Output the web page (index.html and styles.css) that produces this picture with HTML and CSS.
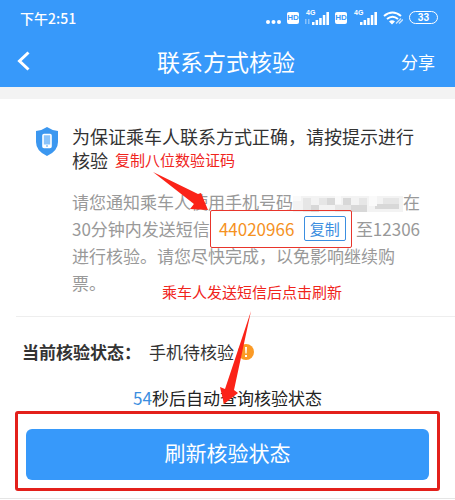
FILE: index.html
```
<!DOCTYPE html>
<html lang="zh-CN">
  <head>
    <meta charset="UTF-8">
    <meta name="viewport" content="width=device-width, initial-scale=1">
    <title>联系方式核验</title>
    <link rel="stylesheet" href="styles.css">
  </head>
  <body>
    <header class="top">
      <div class="statusbar">
        <span class="time">下午2:51</span>
        <div class="icons">
          <svg width="16" height="16" viewBox="0 0 16 16" fill="#fff">
            <circle cx="3" cy="12" r="2"/><circle cx="8.500" cy="12" r="2"/><circle cx="14" cy="12" r="2"/>
          </svg>
          <span class="hd">HD</span>
          <span class="signal"><small>4G</small>
            <svg width="24" height="14" viewBox="0 0 24 14" fill="#fff">
              <path d="M7 11h2.500v3H7zM10.600 9h2.500v5h-2.500zM14.200 7h2.500v7h-2.500zM17.800 4h2.500v10h-2.500zM21.400 1H24v13h-2.600z"/>
              <path d="M0 8h1.500v5H0zM3 8h1.500v5H3z" opacity=".4"/>
            </svg>
          </span>
          <span class="hd">HD</span>
          <span class="signal"><small>4G</small>
            <svg width="24" height="14" viewBox="0 0 24 14" fill="#fff">
              <path d="M7 11h2.500v3H7zM10.600 9h2.500v5h-2.500zM14.200 7h2.500v7h-2.500zM17.800 4h2.500v10h-2.500zM21.400 1H24v13h-2.600z"/>
            </svg>
          </span>
          <svg class="wifi" width="20" height="14" viewBox="0 0 20 14" fill="none" stroke="#fff" stroke-width="2">
            <path d="M1 5q8.500-7 17 0M4 8q5.500-4.500 11 0"/>
            <path d="M6 10.500q3-2.500 6 0L9 13.500z" fill="#fff" stroke="none"/>
            <path d="M13 12.500l5-5M16 12.500l4-4" stroke-width="1.500" opacity=".7"/>
          </svg>
          <span class="battery">33</span>
        </div>
      </div>
      <nav class="navbar">
        <button class="back" aria-label="返回">
          <svg width="13" height="20" viewBox="0 0 13 20" fill="none" stroke="#fff" stroke-width="3">
            <path d="M11.500 1.500L2.500 10l9 8.500"/>
          </svg>
        </button>
        <h1>联系方式核验</h1>
        <a class="share" href="#">分享</a>
      </nav>
    </header>

    <main>
      <section class="notice">
        <svg class="shield" width="22" height="29" viewBox="0 0 22 29">
          <path d="M11 0q5 3.500 11 4v11q0 9-11 14Q0 24 0 15V4q6-.5 11-4z" fill="#3b97f0"/>
          <rect x="7" y="7.500" width="8" height="13" rx="1" fill="#8ac3fa" stroke="#fff" stroke-width="1.600"/>
          <path d="M7 17.500h8v3H7z" fill="#fff"/>
          <circle cx="11" cy="19" r=".8" fill="#3b97f0"/>
        </svg>
        <div class="content">
          <h2>为保证乘车人联系方式正确，请按提示进行核验</h2>
          <p>请您通知乘车人使用手机号码<svg class="mosaic" width="110" height="17" viewBox="0 0 110 17">
              <path fill="#f3f3f3" d="M0 1h110v16H0z"/>
              <path fill="#e6e6e6" d="M10 3h8v14h-8zM26 3h16v7H26zM42 10h16v7H42zM66 3h8v14h-8zM90 3h16v7H90z"/>
              <path fill="#d8d8d8" d="M18 10h8v7h-8zM34 3h8v7h-8zM50 3h8v7h-8zM58 10h16v7H58zM82 9h24v5H82z"/>
              <path fill="#fafafa" d="M0 1h8v5H0zM42 1h6v8h-6zM76 1h8v10h-8z"/>
            </svg>在30分钟内发送短信<span class="code-box"><span class="code">44020966</span><button class="copy">复制</button></span>至12306进行核验。请您尽快完成，以免影响继续购票。</p>
        </div>
        <!-- 操作说明 -->
        <span class="tip tip-copy">复制八位数验证码</span>
        <span class="tip tip-refresh">乘车人发送短信后点击刷新</span>
        <svg class="arrow arrow-copy" width="56" height="40" viewBox="0 0 56 40">
          <path d="M0 0L45 22l3-1 7 17-18-1 4-5z" fill="#fb2318"/>
        </svg>
        <svg class="arrow arrow-refresh" width="32" height="94" viewBox="0 0 32 94">
          <path d="M31 0L14 79l4 3L4 93 0 76l5 2z" fill="#fb2318"/>
        </svg>
      </section>

      <section class="state">
        <div class="row"><b>当前核验状态：</b><span>手机待核验</span><svg class="warn" width="16" height="16" viewBox="0 0 16 16">
            <circle cx="8" cy="8" r="8" fill="#fb9a25"/>
            <path d="M7 3h2l-.4 6.500H7.400zM7 11h2v2H7z" fill="#fff"/>
          </svg></div>
        <p class="countdown"><em>54</em>秒后自动查询核验状态</p>
        <div class="refresh-box">
          <button class="refresh">刷新核验状态</button>
        </div>
      </section>
    </main>
  </body>
</html>
```
FILE: styles.css
```
* {
  box-sizing: border-box;
}
body {
  margin: 0;
  background: #fff;
  color: #333;
  font-family: "Noto Sans CJK SC", sans-serif;
  font-size: 17px;
}
h1, h2, p {
  margin: 0;
  font-weight: normal;
}
button {
  font-family: inherit;
  padding: 0;
  cursor: pointer;
}
svg {
  display: block;
  flex: none;
}

/* header */
.top {
  background: #3799fa;
  color: #fff;
}
.statusbar {
  display: flex;
  justify-content: space-between;
  align-items: center;
  height: 35px;
  padding: 0 17px 0 20px;
}
.time {
  font-size: 14px;
  font-weight: 500;
  line-height: 20px;
}
.icons {
  display: flex;
  align-items: center;
  gap: 6px;
}
.hd {
  width: 12px;
  height: 12px;
  border-radius: 2px;
  background: #fff;
  color: #3799fa;
  font: bold 8px/12px "Liberation Sans", sans-serif;
  text-align: center;
}
.signal {
  position: relative;
}
.signal small {
  position: absolute;
  top: -2px;
  left: 1px;
  font: bold 7px/8px "Liberation Sans", sans-serif;
}
.battery {
  width: 29px;
  height: 13px;
  border: 1px solid #fff;
  border-radius: 7px;
  font: bold 10px/11px Roboto, sans-serif;
  text-align: center;
}
.navbar {
  display: grid;
  grid-template-columns: 60px 1fr 60px;
  align-items: center;
  height: 52px;
  padding: 0 20px 0 17px;
}
.back {
  justify-self: start;
  border: 0;
  background: none;
}
.navbar h1 {
  font-size: 23px;
  line-height: 32px;
  text-align: center;
}
.share {
  justify-self: end;
  color: #fff;
  text-decoration: none;
}

main {
  border-top: 12px solid #f3f3f3;
}

/* notice */
.notice {
  position: relative;
  display: flex;
  gap: 14px;
  margin-left: 16px;
  padding: 25px 33px 20px 20px;
  border-bottom: 1px solid #eee;
}
.shield {
  margin-top: 3px;
}
.content {
  flex: 1;
}
.content h2 {
  font-size: 18px;
  line-height: 24px;
}
.content p {
  margin-top: 16px;
  color: #999;
  line-height: 27px;
}
.mosaic {
  display: inline-block;
  vertical-align: -3px;
}
.code-box {
  display: inline-flex;
  align-items: center;
  justify-content: space-between;
  width: 142px;
  height: 38px;
  margin: -8px 4px -8px 0;
  padding: 0 5px 0 8px;
  border: 1px solid #e8352b;
  border-radius: 2px;
  vertical-align: baseline;
}
.code {
  color: #f5921f;
}
.copy {
  width: 42px;
  height: 25px;
  border: 1px solid #3b8ee0;
  border-radius: 2px;
  background: #fff;
  color: #3b8ee0;
  font-size: 15px;
  line-height: 20px;
}

/* hints over the page */
.tip {
  position: absolute;
  color: #f0241c;
  font-size: 15px;
  line-height: 20px;
  white-space: nowrap;
}
.tip-copy {
  top: 51px;
  left: 99px;
}
.tip-refresh {
  top: 183px;
  left: 146px;
}
.arrow {
  position: absolute;
  z-index: 1;
}
.arrow-copy {
  top: 73px;
  left: 137px;
}
.arrow-refresh {
  top: 212px;
  left: 204px;
}

/* state */
.state {
  padding: 21px 15px 7px;
  border-bottom: 1px solid #e5e5e5;
}
.row {
  display: flex;
  align-items: center;
  padding-left: 7px;
  line-height: 27px;
}
.row span {
  margin: 0 4px 0 8px;
}
.countdown {
  margin-top: 19px;
  color: #222;
  line-height: 27px;
  text-align: center;
}
.countdown em {
  color: #3b8ee0;
  font-style: normal;
}
.refresh-box {
  padding: 15px 8px 8px;
  border: 3px solid #e3201b;
  border-radius: 3px;
}
.refresh {
  display: block;
  width: 100%;
  height: 51px;
  padding-bottom: 6px;
  border: 0;
  border-radius: 6px;
  background: #3799fa;
  color: #fff;
  font-size: 21px;
  line-height: 30px;
}
```
